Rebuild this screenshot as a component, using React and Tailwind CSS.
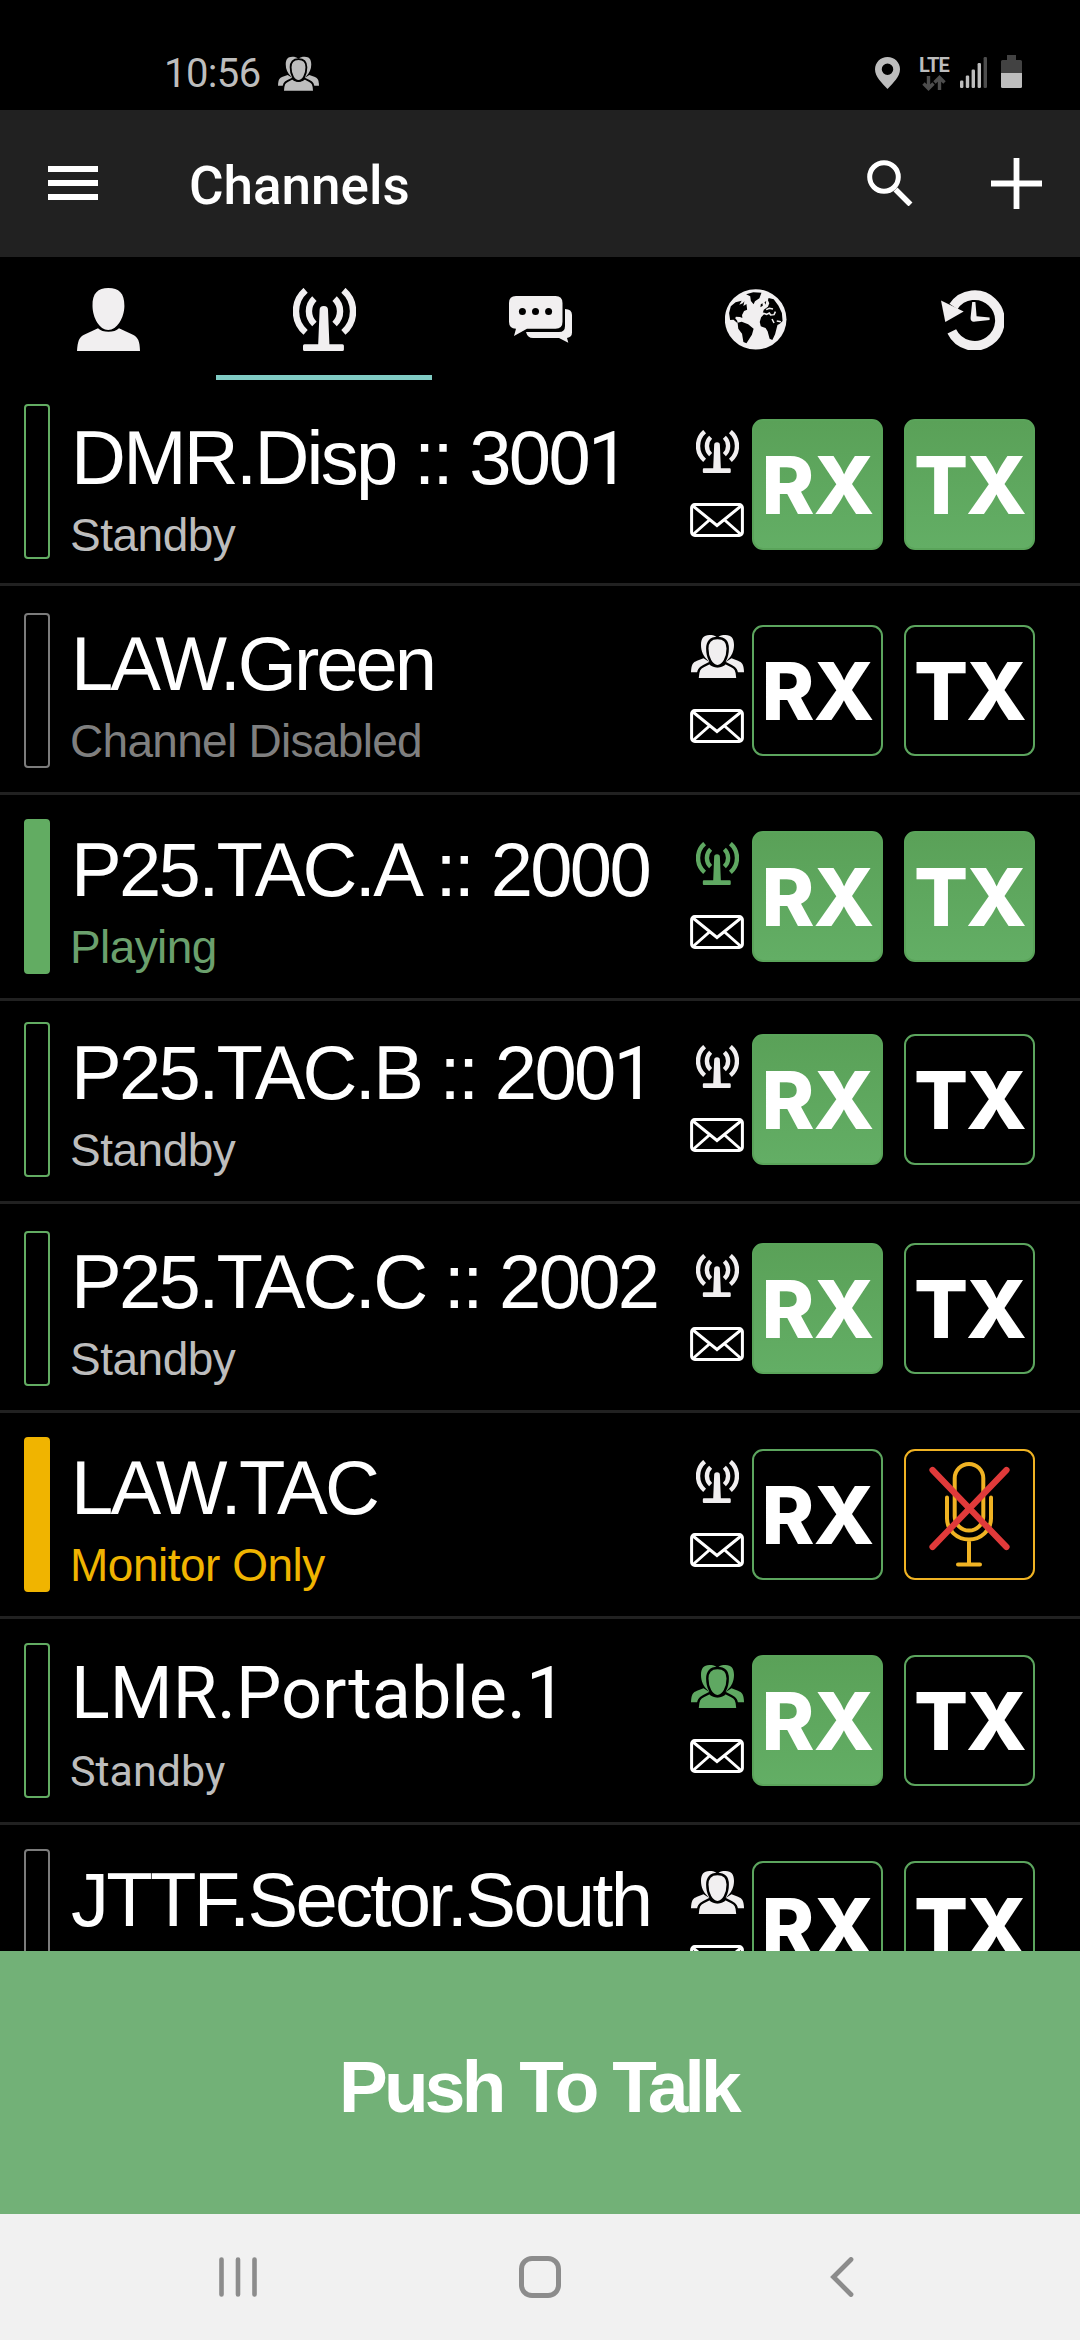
import React from "react";

function Antenna({ className }) {
  return (
    <svg viewBox="0 0 63 63" className={className} fill="none" stroke="currentColor" strokeWidth="6.4">
      <path d="M12.6 2.3A27.8 27.8 0 0 0 12.6 44.4" />
      <path d="M50.4 2.3A27.8 27.8 0 0 1 50.4 44.4" />
      <path d="M21.4 10.6A17.5 17.5 0 0 0 21.4 36" />
      <path d="M41.6 10.6A17.5 17.5 0 0 1 41.6 36" />
      <path
        stroke="none"
        fill="currentColor"
        d="M26.600 22q0-4 4.200-4t4.200 4l1.400 34.200h13q1.500 0 1.500 1.500V61.500q0 1.500-1.500 1.500H11.500q-1.500 0-1.500-1.500v-3.800q0-1.500 1.500-1.500H25.200z"
      />
    </svg>
  );
}

function Group({ className }) {
  return (
    <svg viewBox="0 0 53 43" className={className} fill="currentColor">
      <path d="M26 2.500C24 .5 22 0 18.500 0 12.500 0 10 3.500 10 10c0 6 2.500 11.500 6.500 15l1 1.500H35l1.500-1.500c4-3.500 6.500-9 6.500-15C43 3.500 40.500 0 34.500 0 31 0 28.500.5 27 2.500z" />
      <path d="M0 37.300C.3 29 2 27.500 6 25.800l6.500-2.500L20 28v9.300z" />
      <path d="M53 37.300C52.700 29 51 27.500 47 25.800l-6.500-2.500L33 28v9.300z" />
      <path
        stroke="#000"
        strokeWidth="2.400"
        d="M6.500 45C6.800 34.500 8.700 33 12.700 31l6-3c4 4.500 11.600 4.500 15.600 0l6 3c4 2 5.900 3.500 6.200 14z"
      />
      <path
        stroke="#000"
        strokeWidth="2.400"
        d="M26.500 3c7 0 10.200 4 10.200 10.500 0 9-4.200 17.600-10.200 17.600S16.300 22.500 16.300 13.500C16.300 7 19.500 3 26.500 3z"
      />
    </svg>
  );
}

function Envelope() {
  return (
    <svg viewBox="0 0 54 34" className="h-[34px] w-[54px]" fill="none" stroke="#fff" strokeWidth="3">
      <rect x="1.600" y="1.500" width="50.800" height="31" rx="3.200" />
      <path d="M3 3l24 19.500L51 3M3 31.500L20.500 16M51 31.500L33.500 16" />
    </svg>
  );
}

function Person() {
  return (
    <svg viewBox="0 0 63 63" className="h-[63px] w-[63px]" fill="currentColor">
      <path d="M31.300 0C42 0 47.500 5 47.400 18 47.200 30 40 42 31.300 42S15.700 30 15.500 18C15.200 5 21 0 31.300 0z" />
      <path d="M0 63C.8 53 2 49.500 7 46.800L21 40.300c4.500 4.700 16.500 4.700 21 0l14 6.500c5 2.700 6.800 6.200 7 16.200z" />
    </svg>
  );
}

function Chat() {
  return (
    <svg viewBox="0 0 63 47" className="h-[47px] w-[63px]" fill="currentColor">
      <path d="M7 0h39.500q7 0 7 7v18.700q0 7-7 7H18L5 40l2-7.300Q0 32.500 0 25.700V7q0-7 7-7z" />
      <path d="M56 13q7 0 7 6v17.500Q63 41 58 42l1.300 4.700L50 42H24q-5.500 0-7-6h33q6 0 6-6z" />
      <g fill="#000">
        <circle cx="13.400" cy="15.400" r="3.500" />
        <circle cx="26.500" cy="15.400" r="3.500" />
        <circle cx="39.600" cy="15.400" r="3.500" />
      </g>
    </svg>
  );
}

function Globe() {
  return (
    <svg viewBox="0 0 182 183" preserveAspectRatio="none" className="h-[61px] w-[62px]">
      <circle cx="90" cy="91" r="90.500" fill="currentColor" />
      <g fill="#000">
        <path d="M49 35l-7 12 10-4 5-6-3 14 9-6 2 17-9 4-6 12 1 9-7-3-12-1-2 5 6 7 1 8-12-11-10 1-3-21 5-20 14-12z" />
        <path d="M62 16l21-6 24 1-6 17-13 9-4 9-8-10-2-14z" />
        <path d="M37 101l12-3 19 8 16 13-5 18-16 26-9-4-4-25-11-15z" />
        <path d="M128 27l15 4 14 19 10 22 2 24-8 8-7 4-7 28-8 17-8-4-6-22-6-10-14-5-3-13 4-14 9-10-4-4 3-9 12-9 4-10-4-9z" />
        <path d="M105 46l5-3 1 7-7 5zM116 40l5-4-2 11z" />
      </g>
      <path
        d="M104 76l9-3 9 3 8-4 4 6 10-1 4-9M121 62l9-4 11 2M138 90l6 12M152 96l12 2"
        fill="none"
        stroke="currentColor"
        strokeWidth="4.500"
      />
    </svg>
  );
}

function History() {
  return (
    <svg viewBox="0 0 63 61" className="h-[61px] w-[63px]" fill="none" stroke="currentColor">
      <path d="M12.500 17.500A25.300 25.300 0 1 1 10.800 42.400" strokeWidth="9.600" />
      <path d="M0 11.500L22.700 22.500 4.300 33z" fill="currentColor" stroke="none" />
      <path d="M31.200 13h3.200l1.200 14.300 13 1.200v2.500l-14 1.500q-5.500 1-5-4z" fill="currentColor" stroke="none" />
    </svg>
  );
}

function MicOff() {
  return (
    <svg viewBox="0 0 127 127" className="h-full w-full" fill="none" strokeLinecap="round" stroke="#f0b323" strokeWidth="4">
      <rect x="48.700" y="13" width="28.600" height="66.500" rx="14.300" />
      <path d="M41 46.500v21a22 21 0 0 0 44 0V46.500M63 88.500v25M52 113.500h22" />
      <path d="M26.500 19l74 77M100.500 19L26.500 96" stroke="#e03a3a" strokeWidth="6.200" />
    </svg>
  );
}

function Key({ label, on }) {
  return (
    <div
      className={
        "flex h-[131px] w-[131px] items-center justify-center rounded-[11px] border-2 font-[Inter] text-[80px] leading-none font-extrabold text-white " +
        (on ? "border-[#5aa45a] bg-linear-to-b from-[#5aa158] to-[#63ae65]" : "border-[#5ca55e]")
      }
    >
      <span className={label === "RX" ? "tracking-[-1px]" : "tracking-[-2px]"}>{label}</span>
    </div>
  );
}

const bars = {
  green: "border-[#62ac62]",
  gray: "border-[#7c7c7c]",
  greenFill: "border-[#62ac62] bg-[#62ac62]",
  yellowFill: "border-[#f0b400] bg-[#f0b400]",
};

const arial = "font-['Liberation_Sans',Arial,sans-serif]";
const standby = "text-[#bdbdbd] tracking-[-0.5px]";
const tight = "tracking-[-2.7px]";

const channels = [
  { name: "DMR.Disp :: 3001", status: "Standby", st: standby, bar: "green", icon: "a", rx: true, tx: "on", row: "h-[206px] pt-[27px]", lift: "-mt-[3px]", nt: tight },
  { name: "LAW.Green", status: "Channel Disabled", st: "text-[#7f7f7f] tracking-[-0.7px]", bar: "gray", icon: "g", rx: false, tx: "off", row: "h-[209px] pt-[27px]", nt: "tracking-[-3px]" },
  { name: "P25.TAC.A :: 2000", status: "Playing", st: "text-[#6ba06d] tracking-[-0.6px]", bar: "greenFill", icon: "a", live: true, rx: true, tx: "on", row: "h-[206px] pt-[24px]", nt: tight },
  { name: "P25.TAC.B :: 2001", status: "Standby", st: standby, bar: "green", icon: "a", rx: true, tx: "off", row: "h-[203px] pt-[21px]", nt: tight },
  { name: "P25.TAC.C :: 2002", status: "Standby", st: standby, bar: "green", icon: "a", rx: true, tx: "off", row: "h-[209px] pt-[27px]", nt: tight },
  { name: "LAW.TAC", status: "Monitor Only", st: "text-[#f0b400] tracking-[-0.5px]", bar: "yellowFill", icon: "a", rx: false, tx: "mic", row: "h-[206px] pt-[24px]", nt: tight },
  { name: "LMR.Portable.1", status: "Standby", st: "text-[#bdbdbd] text-[43px]", bar: "green", icon: "g", live: true, rx: true, tx: "off", row: "h-[206px] pt-[24px]", roboto: true, nt: "text-[72px]" },
  { name: "JTTF.Sector.South", status: "", st: "", bar: "gray", icon: "g", rx: false, tx: "off", row: "h-[206px] pt-[24px]", nt: tight },
];

// A trailing "1" is set in Roboto, whose figure has no foot.
function Name({ c }) {
  if (c.roboto || !c.name.endsWith("1")) return c.name;
  return (
    <>
      {c.name.slice(0, -1)}
      <span className="font-[Roboto,sans-serif] text-[74px]">1</span>
    </>
  );
}

function Channel({ c }) {
  const font = c.roboto ? "font-[Roboto,sans-serif]" : arial;
  const tone = c.live ? "text-[#5fa862]" : "text-[#f1eff0]";
  return (
    <div className={"flex shrink-0 items-start border-b-[3px] border-[#212121] pl-6 " + c.row}>
      <div className={"h-[155px] w-[26px] shrink-0 rounded-[4px] border-2 " + bars[c.bar] + " " + (c.lift || "")} />
      <div className={"w-[640px] shrink-0 pt-[13px] pl-5 whitespace-nowrap " + font}>
        <div className={"ml-px h-[76px] leading-[76px] text-white " + (c.roboto ? "" : "text-[76px] ") + c.nt}>
          <Name c={c} />
        </div>
        {c.status && <div className={"mt-4 h-[46px] leading-[46px] " + (c.roboto ? "" : "text-[46px] ") + c.st}>{c.status}</div>}
      </div>
      <div className="flex h-[130px] w-[54px] shrink-0 flex-col items-center justify-between pt-[22px]">
        {c.icon === "a" ? <Antenna className={"mt-px h-[43px] w-[43px] " + tone} /> : <Group className={"h-[43px] w-[53px] " + tone} />}
        <Envelope />
      </div>
      <div className="ml-2 flex gap-[21px] pt-3">
        <Key label="RX" on={c.rx} />
        {c.tx === "mic" ? (
          <div className="h-[131px] w-[131px] rounded-[11px] border-2 border-[#f0b323]">
            <MicOff />
          </div>
        ) : (
          <Key label="TX" on={c.tx === "on"} />
        )}
      </div>
    </div>
  );
}

function StatusBar() {
  return (
    <div className="flex h-[110px] items-start pt-[54px] pr-[58px] pl-[164px] text-[#bdbdbd]">
      <span className="mt-px font-[Roboto,sans-serif] text-[40px] leading-[38px] tracking-[-0.6px]">10:56</span>
      <Group className="mt-0.5 ml-[17px] h-[35px] w-[41px]" />
      <div className="ml-auto flex items-start">
        <svg viewBox="0 0 25 32" className="mt-[3px] h-8 w-[25px]" fill="currentColor">
          <path fillRule="evenodd" d="M12.500 0C5.500 0 0 5.500 0 12.300 0 20 7 26 12.500 32 18 26 25 20 25 12.300 25 5.500 19.500 0 12.500 0zm0 6.500a5.700 5.700 0 1 1 0 11.500 5.700 5.700 0 0 1 0-11.500z" />
        </svg>
        <div className="mt-px ml-[18px] flex w-[32px] flex-col items-center">
          <span className="h-5 font-[Roboto,sans-serif] text-[20px] leading-5 font-bold tracking-[-0.8px]">LTE</span>
          <svg viewBox="0 0 24 16" className="h-4 w-6" fill="none" stroke="#4d4d4d" strokeWidth="3.400">
            <path d="M6.500 1v12M1.500 8.500l5 5 5-5M17.500 15V3M12.500 7.500l5-5 5 5" />
          </svg>
        </div>
        <svg viewBox="0 0 27 31" className="mt-[3px] ml-[10px] h-[31px] w-[27px]" fill="currentColor">
          <rect x="0" y="23.500" width="3.400" height="7.500" rx="1.200" />
          <rect x="5.800" y="18.500" width="3.400" height="12.500" rx="1.200" />
          <rect x="11.600" y="12.500" width="3.400" height="18.500" rx="1.200" />
          <rect x="17.600" y="6" width="3.400" height="25" rx="1.200" />
          <rect x="23.600" y="0" width="3.400" height="31" rx="1.200" fill="#4d4d4d" />
        </svg>
        <svg viewBox="0 0 21 33" className="mt-px ml-[14px] h-[33px] w-[21px]">
          <path d="M6 0h9v5h4.500q1.500 0 1.500 1.500V18H0V6.500Q0 5 1.500 5H6z" fill="#424242" />
          <path d="M0 18h21v13.500q0 1.500-1.500 1.500h-18Q0 33 0 31.500z" fill="currentColor" />
        </svg>
      </div>
    </div>
  );
}

export default function App() {
  return (
    <div className="flex h-[2340px] w-[1080px] flex-col overflow-hidden bg-black">
      <StatusBar />

      <header className="flex h-[147px] shrink-0 items-center bg-[#212121] pr-[38px] pb-px pl-12 text-white">
        <div className="flex flex-col gap-2">
          <div className="h-1.5 w-[50px] bg-white" />
          <div className="h-1.5 w-[50px] bg-white" />
          <div className="h-1.5 w-[50px] bg-white" />
        </div>
        <h1 className="mt-[5px] ml-[91px] font-[Roboto,sans-serif] text-[53px] leading-[60px] font-medium">Channels</h1>
        <svg viewBox="0 0 46 46" className="ml-auto h-[46px] w-[46px]" fill="none" stroke="#fff">
          <circle cx="17" cy="17" r="14.300" strokeWidth="5" />
          <path d="M28.500 29.500L43.500 44.500" strokeWidth="5.500" />
        </svg>
        <svg viewBox="0 0 51 51" className="ml-[78px] h-[51px] w-[51px]" stroke="#fff" strokeWidth="5.800">
          <path d="M25.500 0v51M0 25.500h51" />
        </svg>
      </header>

      <nav className="grid h-[123px] shrink-0 grid-cols-5 text-[#f1eff0]">
        <div className="flex items-center justify-center pt-0.5"><Person /></div>
        <div className="flex items-center justify-center border-b-[5px] border-[#80cbc4] pt-[7px]"><Antenna className="h-[63px] w-[63px]" /></div>
        <div className="flex items-center justify-center pt-0.5"><Chat /></div>
        <div className="flex items-center justify-center pt-0.5"><Globe /></div>
        <div className="flex items-center justify-center pt-0.5"><History /></div>
      </nav>

      <main className="flex h-[1571px] shrink-0 flex-col overflow-hidden">
        {channels.map((c) => (
          <Channel key={c.name} c={c} />
        ))}
      </main>

      <button className={"flex h-[263px] shrink-0 items-center justify-center bg-[#72b177] pt-2 pr-[3px] text-[73px] leading-none font-bold tracking-[-3.7px] text-white " + arial}>
        Push To Talk
      </button>

      <footer className="grid h-[126px] shrink-0 grid-cols-[476px_128px_476px] items-center bg-[#f1f1f1] pb-px text-[#8c8c8c]">
        <svg viewBox="0 0 38 40" className="h-10 w-[38px] justify-self-center" stroke="currentColor" strokeWidth="4.600" strokeLinecap="round">
          <path d="M2.500 2.500v35M19 2.500v35M35.500 2.500v35" />
        </svg>
        <div className="h-[42px] w-[42px] justify-self-center rounded-[13px] border-[5px] border-[#8c8c8c]" />
        <svg viewBox="0 0 24 40" className="h-10 w-6 justify-self-center" fill="none" stroke="currentColor" strokeWidth="4.800" strokeLinecap="round">
          <path d="M21 2.500L3.500 20 21 37.500" />
        </svg>
      </footer>
    </div>
  );
}
